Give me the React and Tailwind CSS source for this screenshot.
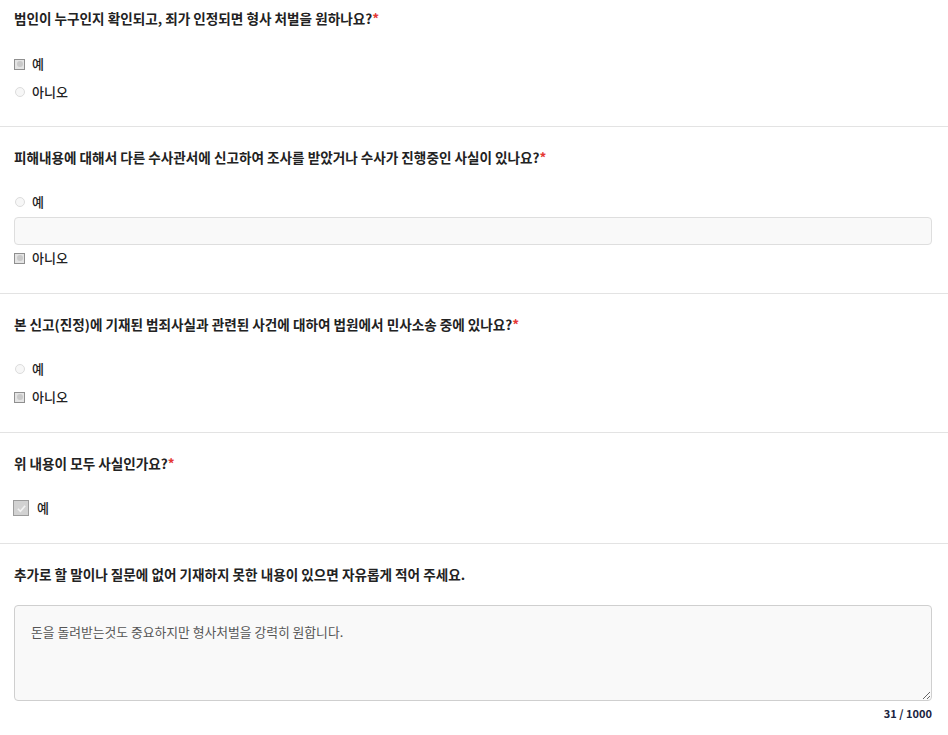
import React from "react";

const font = { fontFamily: '"Noto Sans CJK KR", "Noto Sans", sans-serif' };

function RadioOff() {
  return (
    <span className="flex w-[11px] h-[11px] items-center justify-center">
      <span className="block w-[10px] h-[10px] rounded-full border border-[#dcdcdc] bg-[#f7f7f7]" />
    </span>
  );
}

function RadioOn() {
  return (
    <span className="flex w-[11px] h-[11px] items-center justify-center bg-[#8f8f8f]">
      <span className="flex w-[9px] h-[9px] items-center justify-center bg-[#e4e4e4]">
        <span className="block w-[6px] h-[6px] rounded-full bg-[#c9c9c9]" />
      </span>
    </span>
  );
}

function Option({ on, label }) {
  return (
    <div className="flex items-center h-[20px]">
      <span className="w-[18px] flex">{on ? <RadioOn /> : <RadioOff />}</span>
      <span className="text-[13px] text-[#222] font-medium leading-[20px]">{label}</span>
    </div>
  );
}

function Title({ children }) {
  return (
    <div className="text-[13.6px] font-bold text-[#222] leading-[20px]">
      {children}
      <span className="text-[#e53935]">*</span>
    </div>
  );
}

export default function App() {
  return (
    <div className="w-[948px] bg-white" style={font}>
      {/* Section 1 */}
      <div className="pl-[14px] pr-[16px] pt-[8px] pb-[24px] border-b border-[#e3e3e3]">
        <Title>범인이 누구인지 확인되고, 죄가 인정되면 형사 처벌을 원하나요?</Title>
        <div className="mt-[26px] flex flex-col gap-[8px]">
          <Option on label="예" />
          <Option label="아니오" />
        </div>
      </div>

      {/* Section 2 */}
      <div className="pl-[14px] pr-[16px] pt-[20px] pb-[25px] border-b border-[#e3e3e3]">
        <Title>피해내용에 대해서 다른 수사관서에 신고하여 조사를 받았거나 수사가 진행중인 사실이 있나요?</Title>
        <div className="mt-[25px] flex flex-col">
          <Option label="예" />
          <div className="mt-[5px] h-[28px] w-full rounded-[4px] border border-[#dedede] bg-[#f9f9f9]" />
          <div className="mt-[3px]">
            <Option on label="아니오" />
          </div>
        </div>
      </div>

      {/* Section 3 */}
      <div className="pl-[14px] pr-[16px] pt-[20px] pb-[25px] border-b border-[#e3e3e3]">
        <Title>본 신고(진정)에 기재된 범죄사실과 관련된 사건에 대하여 법원에서 민사소송 중에 있나요?</Title>
        <div className="mt-[25px] flex flex-col gap-[8px]">
          <Option label="예" />
          <Option on label="아니오" />
        </div>
      </div>

      {/* Section 4 */}
      <div className="pl-[14px] pr-[16px] pt-[20px] pb-[25px] border-b border-[#e3e3e3]">
        <Title>위 내용이 모두 사실인가요?</Title>
        <div className="mt-[25px] flex items-center h-[20px]">
          <span className="flex w-[16px] h-[16px] items-center justify-center bg-[#9c9c9c] mr-[8px] ml-[-1px]">
            <span className="flex w-[14px] h-[14px] items-center justify-center bg-[#d2d2d2]">
              <svg width="11" height="11" viewBox="0 0 12 12">
                <path d="M2 6.3 L4.8 9 L10 3" fill="none" stroke="#f2f2f2" strokeWidth="1.8" />
              </svg>
            </span>
          </span>
          <span className="text-[13px] text-[#222] font-medium leading-[20px]">예</span>
        </div>
      </div>

      {/* Section 5 */}
      <div className="pl-[14px] pr-[16px] pt-[20px] pb-[14px]">
        <div className="text-[13.6px] font-bold text-[#222] leading-[20px]">
          추가로 할 말이나 질문에 없어 기재하지 못한 내용이 있으면 자유롭게 적어 주세요.
        </div>
        <textarea
          readOnly
          className="mt-[21px] block w-full h-[96px] rounded-[4px] border border-[#cfcfcf] bg-[#f9f9f9] px-[16px] pt-[16px] text-[12.8px] text-[#555] leading-[20px] outline-none"
          style={font}
          defaultValue="돈을 돌려받는것도 중요하지만 형사처벌을 강력히 원합니다."
        />
        <div className="mt-[4px] text-right text-[11px] font-bold text-[#1a2340] leading-[16px] whitespace-pre">
          31 / 1000
        </div>
      </div>
    </div>
  );
}
